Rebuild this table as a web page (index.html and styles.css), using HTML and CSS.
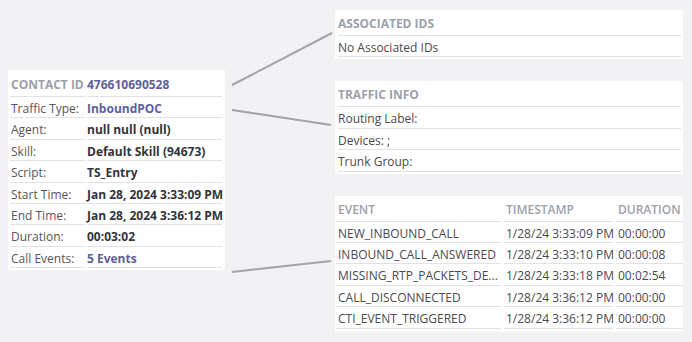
FILE: index.html
```
<!DOCTYPE html>
<html>
<head>
	<meta name="viewport" content="width=device-width, initial-scale=1.0">
	<title>Contact details</title>
	<link rel="stylesheet" href="styles.css">
</head>
<body>

	<div id="board">

		<div id="contactColumn">
			<div class="card" id="contactCard">
				<div class="pair headRow">
					<div class="cell head">CONTACT ID</div>
					<div class="cell value link">476610690528</div>
				</div>
				<div class="pair"><div class="cell label">Traffic Type:</div><div class="cell value link">InboundPOC</div></div>
				<div class="pair"><div class="cell label">Agent:</div><div class="cell value">null null (null)</div></div>
				<div class="pair"><div class="cell label">Skill:</div><div class="cell value">Default Skill (94673)</div></div>
				<div class="pair"><div class="cell label">Script:</div><div class="cell value">TS_Entry</div></div>
				<div class="pair"><div class="cell label">Start Time:</div><div class="cell value">Jan 28, 2024 3:33:09 PM</div></div>
				<div class="pair"><div class="cell label">End Time:</div><div class="cell value">Jan 28, 2024 3:36:12 PM</div></div>
				<div class="pair"><div class="cell label">Duration:</div><div class="cell value">00:03:02</div></div>
				<div class="pair"><div class="cell label">Call Events:</div><div class="cell value link">5 Events</div></div>
			</div>
		</div>

		<div id="detailColumn">
			<div class="card">
				<div class="cell head headRow">ASSOCIATED IDS</div>
				<div class="cell">No Associated IDs</div>
			</div>

			<div class="card">
				<div class="cell head headRow">TRAFFIC INFO</div>
				<div class="cell">Routing Label:</div>
				<div class="cell">Devices: ;</div>
				<div class="cell">Trunk Group:</div>
			</div>

			<div class="card" id="eventsCard">
				<div class="eventRow headRow">
					<div class="cell head">EVENT</div>
					<div class="cell head">TIMESTAMP</div>
					<div class="cell head">DURATION</div>
				</div>
				<div class="eventRow"><div class="cell">NEW_INBOUND_CALL</div><div class="cell">1/28/24 3:33:09 PM</div><div class="cell">00:00:00</div></div>
				<div class="eventRow"><div class="cell">INBOUND_CALL_ANSWERED</div><div class="cell">1/28/24 3:33:10 PM</div><div class="cell">00:00:08</div></div>
				<div class="eventRow"><div class="cell">MISSING_RTP_PACKETS_DE...</div><div class="cell">1/28/24 3:33:18 PM</div><div class="cell">00:02:54</div></div>
				<div class="eventRow"><div class="cell">CALL_DISCONNECTED</div><div class="cell">1/28/24 3:36:12 PM</div><div class="cell">00:00:00</div></div>
				<div class="eventRow"><div class="cell">CTI_EVENT_TRIGGERED</div><div class="cell">1/28/24 3:36:12 PM</div><div class="cell">00:00:00</div></div>
			</div>
		</div>

		<!-- connectors from the contact card to each detail card -->
		<svg id="links" width="692" height="342" viewBox="0 0 692 342">
			<line x1="232" y1="85" x2="332" y2="33"/>
			<line x1="232" y1="110" x2="331" y2="125"/>
			<line x1="232" y1="272" x2="331" y2="261"/>
		</svg>

	</div>

</body>
</html>
```

FILE: styles.css
```
body{
	margin: 0;
	background-color: #f2f2f5;
	font-family: "Open Sans", "Liberation Sans", sans-serif;
	font-size: 12px;
	color: #4a4a50;
}

#board{
	position: relative;
	display: flex;
	align-items: flex-start;
	padding: 10px 0 0 8px;
	height: 332px;
	box-sizing: border-box;
}

#contactColumn{
	width: 217px;
	margin-top: 60px;
}

#detailColumn{
	width: 348px;
	margin-left: 110px;
	display: flex;
	flex-direction: column;
	gap: 22px;
}

.card{
	background-color: #ffffff;
	padding: 2px 2px 2px 3px;
}

.cell{
	box-sizing: border-box;
	height: 21.4px;
	padding-top: 2px;
	line-height: 19px;
	border-bottom: 1px solid #e2e2e6;
	white-space: nowrap;
}

.headRow,
.headRow .cell{
	height: 24px;
	padding-top: 0;
	line-height: 24px;
}

.head{
	font-weight: 700;
	color: #9d9fab;
}

/* contact card: label / value pairs */
#contactCard{
	padding: 3px 3px 2px 2px;
}

.pair{
	display: grid;
	grid-template-columns: 75px minmax(0, 1fr);
	column-gap: 2px;
}

.pair .cell:first-child{
	padding-left: 1px;
}

.label{
	color: #56565c;
}

.value{
	font-weight: 700;
	color: #33343c;
}

.link{
	color: #5d5f9c;
}

/* events table */
#eventsCard{
	padding: 2px 0 4px 1px;
}

.eventRow{
	display: grid;
	grid-template-columns: 165px 109px minmax(0, 1fr);
	column-gap: 3px;
}

.eventRow .cell{
	padding-left: 2px;
}

.eventRow .head{
	font-weight: 600;
}

#links{
	position: absolute;
	left: 0;
	top: 0;
	pointer-events: none;
}

#links line{
	stroke: #a4a4a8;
	stroke-width: 2;
}
```
